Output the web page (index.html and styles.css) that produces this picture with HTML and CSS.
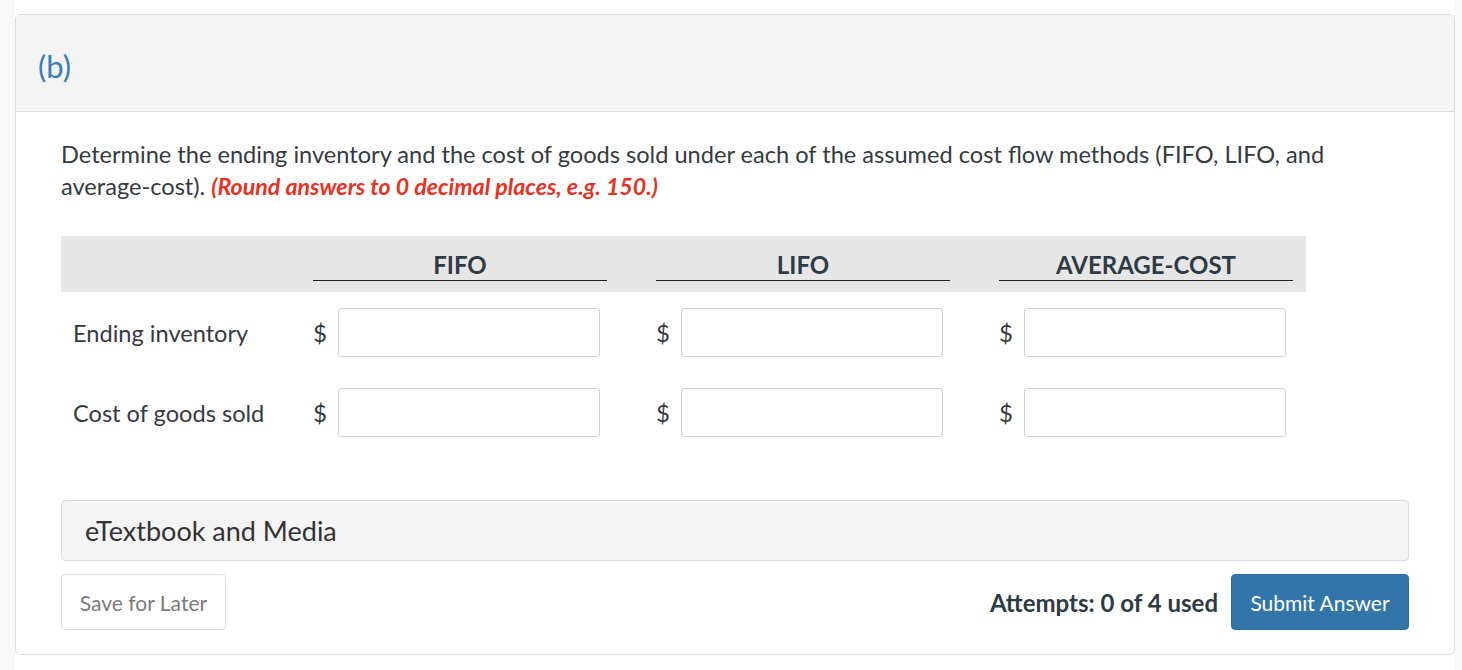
FILE: index.html
```html
<!DOCTYPE html>
<html>
<head>
<meta charset="utf-8">
<link rel="stylesheet" href="styles.css">
</head>
<body>
<div class="page">
  <div class="card">
    <div class="card-head"><span class="part">(b)</span></div>
    <div class="card-body">
      <p class="question">Determine the ending inventory and the cost of goods sold under each of the assumed cost flow methods (FIFO, LIFO, and average-cost). <em class="hint">(Round answers to 0 decimal places, e.g. 150.)</em></p>

      <div class="grid">
        <div class="band">
          <div class="hcell blank"></div>
          <div class="hcell"><span class="hlabel">FIFO</span></div>
          <div class="hcell"><span class="hlabel">LIFO</span></div>
          <div class="hcell"><span class="hlabel">AVERAGE-COST</span></div>
        </div>
        <div class="row">
          <div class="rlabel">Ending inventory</div>
          <div class="cell"><span class="dollar">$</span><input class="box" type="text"></div>
          <div class="cell"><span class="dollar">$</span><input class="box" type="text"></div>
          <div class="cell"><span class="dollar">$</span><input class="box" type="text"></div>
        </div>
        <div class="row">
          <div class="rlabel">Cost of goods sold</div>
          <div class="cell"><span class="dollar">$</span><input class="box" type="text"></div>
          <div class="cell"><span class="dollar">$</span><input class="box" type="text"></div>
          <div class="cell"><span class="dollar">$</span><input class="box" type="text"></div>
        </div>
      </div>

      <div class="media">eTextbook and Media</div>

      <div class="actions">
        <button class="btn save">Save for Later</button>
        <div class="right">
          <span class="attempts">Attempts: 0 of 4 used</span>
          <button class="btn submit">Submit Answer</button>
        </div>
      </div>
    </div>
  </div>
</div>
</body>
</html>
```

FILE: styles.css
```css
* { box-sizing: border-box; }
html, body { margin: 0; padding: 0; }
body {
  background: #f8f8f8;
  font-family: Lato, "Open Sans", sans-serif;
  color: #333;
  height: 670px;
  overflow: hidden;
}
.page {
  background: #fff;
  margin: 0 7px 0 15px;
  min-height: 670px;
  padding-top: 14px;
}
.card {
  border: 1px solid #dcdcdc;
  border-radius: 5px;
  background: #fff;
  overflow: hidden;
}
.card-head {
  background: #f4f4f4;
  border-bottom: 1px solid #dcdcdc;
  height: 97px;
  padding: 33px 22px 0;
}
.part {
  color: #3a7db4;
  font-size: 31px;
  line-height: 37px;
}
.card-body {
  padding: 26px 45px 24px 45px;
}
.question {
  margin: 0;
  font-size: 23.6px;
  line-height: 32px;
  color: #343a40;
}
.hint {
  color: #e8321f;
  font-weight: 700;
  font-style: italic;
  font-size: 23.2px;
}
.grid { margin-top: 34px; }
.band {
  width: 1245px;
  background: #e6e6e6;
  height: 56px;
  display: grid;
  grid-template-columns: 203px 294px 294px 294px;
  column-gap: 49px;
  padding-right: 13px;
  align-items: end;
  padding-bottom: 11px;
}
.hcell {
  text-align: center;
  border-bottom: 1px solid #222;
  padding-bottom: 1px;
}
.hcell.blank { border-bottom: none; }
.hlabel {
  font-weight: 700;
  font-size: 24px;
  line-height: 28px;
  color: #2e3a44;
}
.row {
  display: grid;
  grid-template-columns: 203px 294px 294px 294px;
  column-gap: 49px;
  align-items: center;
  height: 49px;
  margin-top: 16px;
}
.row + .row { margin-top: 31px; }
.rlabel {
  padding-left: 12px;
  font-size: 23.6px;
  color: #343a40;
  white-space: nowrap;
}
.cell {
  display: flex;
  align-items: center;
  gap: 13px;
}
.dollar {
  width: 12px;
  font-size: 24px;
  color: #343a40;
}
.box {
  width: 262px;
  height: 49px;
  border: 1px solid #cfcfcf;
  border-radius: 3px;
  background: #fff;
  margin: 0;
}
.media {
  margin-top: 63px;
  height: 61px;
  background: #f4f4f4;
  border: 1px solid #dcdcdc;
  border-radius: 4px;
  font-size: 27px;
  line-height: 59px;
  padding-left: 23px;
  color: #333;
}
.actions {
  margin-top: 13px;
  display: flex;
  justify-content: space-between;
  align-items: center;
}
.btn {
  font-family: Lato, "Open Sans", sans-serif;
  font-size: 21px;
  border-radius: 4px;
  height: 56px;
  cursor: pointer;
  padding: 0;
}
.save {
  width: 165px;
  background: #fff;
  border: 1px solid #dcdcdc;
  color: #7a7a7a;
}
.right {
  display: flex;
  align-items: center;
  gap: 13px;
}
.attempts {
  font-weight: 700;
  font-size: 24px;
  color: #2e3a44;
}
.submit {
  width: 178px;
  background: #3276a9;
  border: 1px solid #2f6d9e;
  color: #fff;
}
```
